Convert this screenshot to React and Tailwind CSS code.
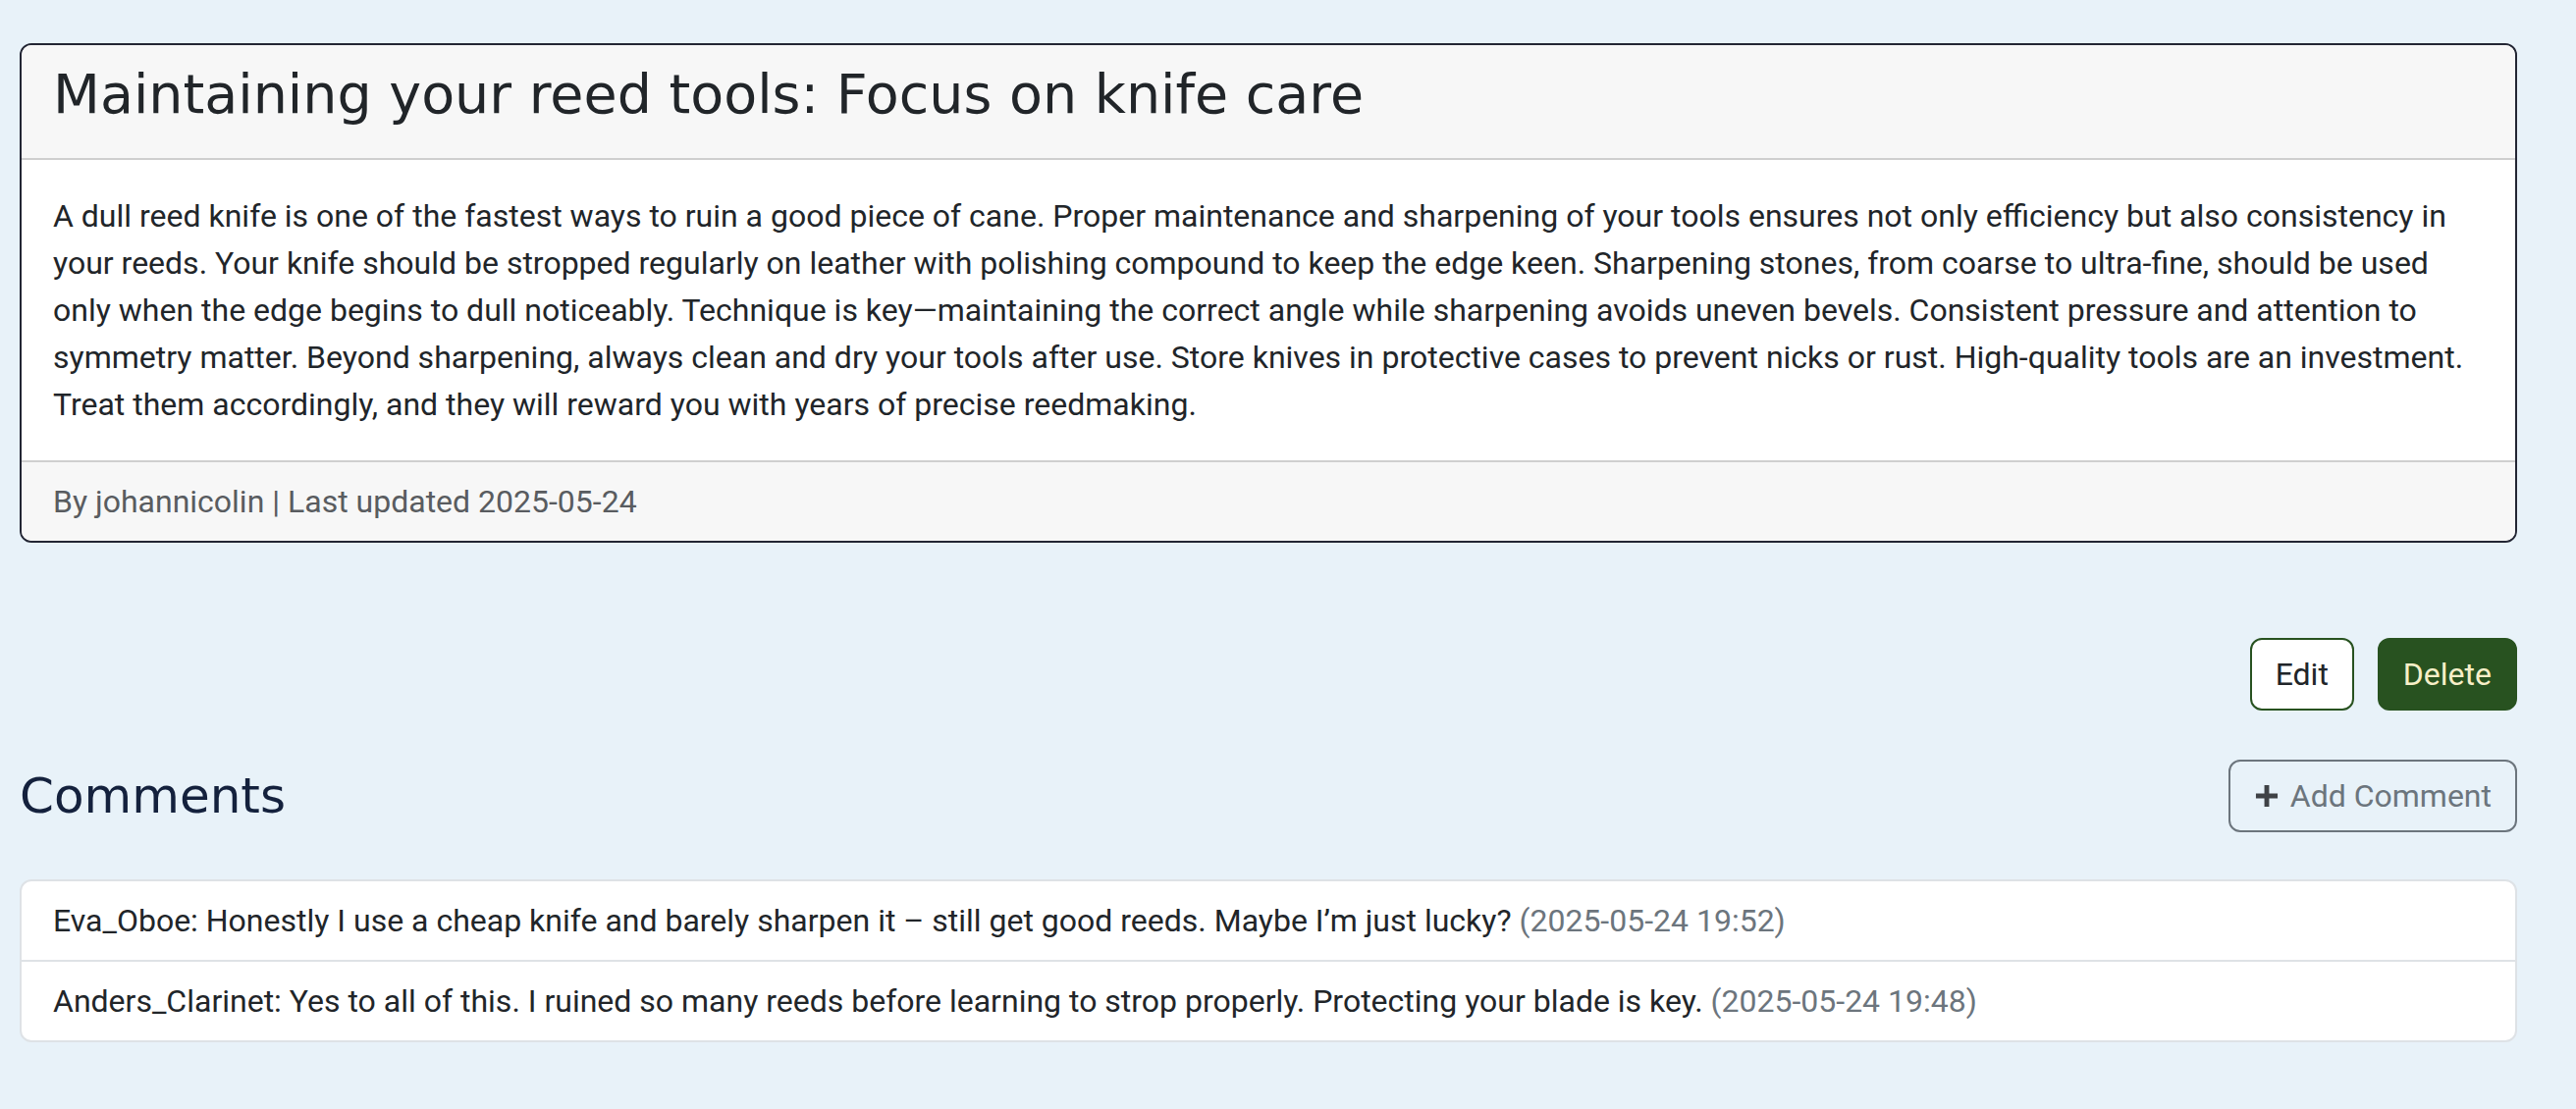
import React from 'react';

const comments = [
  {
    author: 'Eva_Oboe',
    text: 'Honestly I use a cheap knife and barely sharpen it – still get good reeds. Maybe I’m just lucky?',
    date: '2025-05-24 19:52',
  },
  {
    author: 'Anders_Clarinet',
    text: 'Yes to all of this. I ruined so many reeds before learning to strop properly. Protecting your blade is key.',
    date: '2025-05-24 19:48',
  },
];

export default function App() {
  return (
    <div className="min-h-screen bg-[#e8f2f9] pl-5 pr-[60px] pt-[44px] pb-10 font-['Roboto',sans-serif] text-[32px] leading-[48px] text-[#212529]">
      {/* Article card */}
      <div className="rounded-[12px] border-[2px] border-[#232634] bg-white overflow-hidden">
        <div className="h-[117px] bg-[#f7f7f7] border-b-[2px] border-[#cfcfcf] px-8 pt-4">
          <h3 className="font-['DejaVu_Sans',sans-serif] text-[55.5px] leading-[67px] text-[#212529]">
            Maintaining your reed tools: Focus on knife care
          </h3>
        </div>
        <div className="px-8 py-[33px]">
          <p>
            A dull reed knife is one of the fastest ways to ruin a good piece of cane. Proper maintenance and sharpening of your tools ensures not only efficiency but also consistency in your reeds. Your knife should be stropped regularly on leather with polishing compound to keep the edge keen. Sharpening stones, from coarse to ultra-fine, should be used only when the edge begins to dull noticeably. Technique is key—maintaining the correct angle while sharpening avoids uneven bevels. Consistent pressure and attention to symmetry matter. Beyond sharpening, always clean and dry your tools after use. Store knives in protective cases to prevent nicks or rust. High-quality tools are an investment. Treat them accordingly, and they will reward you with years of precise reedmaking.
          </p>
        </div>
        <div className="bg-[#f7f7f7] border-t-[2px] border-[#cfcfcf] px-8 py-4 text-[#595c60]">
          By johannicolin | Last updated 2025-05-24
        </div>
      </div>

      {/* Actions */}
      <div className="mt-[97px] flex justify-end gap-6">
        <button className="h-[74px] px-6 rounded-[12px] border-[2px] border-[#285220] bg-white text-[#212529]">
          Edit
        </button>
        <button className="h-[74px] px-6 rounded-[12px] border-[2px] border-[#285220] bg-[#285220] text-[#f7efc8]">
          Delete
        </button>
      </div>

      {/* Comments header */}
      <div className="mt-[50px] flex items-center justify-between">
        <h4 className="font-['DejaVu_Sans',sans-serif] text-[50px] leading-[60px] text-[#14213d]">
          Comments
        </h4>
        <button className="h-[74px] px-6 rounded-[12px] border-[2px] border-[#6c757d] text-[#6c757d] flex items-center gap-[11px]">
          <svg width="26" height="26" viewBox="0 0 16 16" className="text-[#3f4246]">
            <path d="M8 1.2v13.6M1.2 8h13.6" stroke="currentColor" strokeWidth="3" fill="none" />
          </svg>
          Add Comment
        </button>
      </div>

      {/* Comment list */}
      <ul className="mt-[48px] rounded-[12px] border-[2px] border-[#dee2e6] bg-white overflow-hidden">
        {comments.map((c, i) => (
          <li key={i} className={`px-8 py-4 ${i > 0 ? 'border-t-[2px] border-[#dee2e6]' : ''}`}>
            {c.author}: {c.text} <span className="text-[#6c757d]">({c.date})</span>
          </li>
        ))}
      </ul>
    </div>
  );
}
